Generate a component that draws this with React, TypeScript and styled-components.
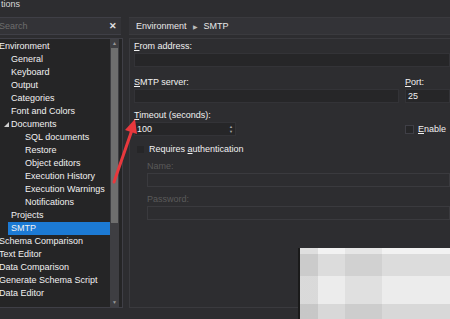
import styled, { createGlobalStyle } from 'styled-components';

const GlobalStyle = createGlobalStyle`
  html, body {
    margin: 0;
    padding: 0;
    background: #2d2d30;
    overflow: hidden;
  }
  body {
    font-family: "Liberation Sans", "Noto Sans", sans-serif;
    font-size: 9px;
    color: #f1f1f1;
  }
`;

const Window = styled.div`
  position: relative;
  width: 450px;
  height: 319px;
  overflow: hidden;
  display: flex;
  flex-direction: column;
  background: #2d2d30;
`;

const TitleBar = styled.div`
  height: 14px;
  line-height: 8px;
  padding-left: 1px;
  color: #d8d8d8;
  overflow: hidden;
`;

const TopRow = styled.div`
  display: flex;
  gap: 8px;
  height: 18px;
  margin-top: 3px;
`;

const SearchBox = styled.div`
  width: 122px;
  margin-left: -1px;
  display: flex;
  align-items: center;
  justify-content: space-between;
  background: #333337;
  border-top: 1px solid #3f3f46;
  border-bottom: 1px solid #3f3f46;
  color: #6d6d6d;
  padding-right: 4px;
  box-sizing: border-box;
`;

const ClearIcon = styled.span`
  color: #e0e0e0;
  font-size: 9px;
  font-weight: bold;
`;

const Breadcrumb = styled.div`
  flex: 1;
  display: flex;
  align-items: center;
  gap: 6px;
  padding-left: 7px;
  background: #333337;
  border-top: 1px solid #3a3a3e;
  border-bottom: 1px solid #3a3a3e;
  color: #e8e8e8;
`;

const Sep = styled.span`
  font-size: 6px;
  color: #bbb;
`;

const Main = styled.div`
  display: flex;
  gap: 6px;
  margin-top: 3px;
  height: 270px;
`;

const TreePanel = styled.div`
  width: 124px;
  margin-left: -1px;
  display: flex;
  background: #252526;
  border: 1px solid #3f3f46;
  border-left: none;
  box-sizing: border-box;
`;

const TreeList = styled.div`
  flex: 1;
  padding-top: 1px;
`;

const TreeRow = styled.div<{ $depth: number; $selected?: boolean }>`
  height: 13px;
  line-height: 13px;
  display: flex;
  align-items: center;
  margin-left: ${({ $depth }) => ($depth === 0 ? 0 : $depth === 1 ? 9 : 23)}px;
  padding-left: ${({ $depth }) => ($depth === 0 ? 0 : 3)}px;
  background: ${({ $selected }) => ($selected ? '#1c7ad4' : 'transparent')};
  color: #f1f1f1;
  white-space: nowrap;
`;

const Caret = styled.svg`
  width: 5px;
  height: 5px;
  margin-left: -7px;
  margin-right: 2px;
`;

const ScrollBar = styled.div`
  width: 9px;
  margin-right: 3px;
  display: flex;
  flex-direction: column;
  align-items: center;
  background: #3e3e42;
`;

const ScrollArrow = styled.div`
  height: 9px;
  color: #999;
  font-size: 5px;
  line-height: 9px;
`;

const ScrollThumb = styled.div`
  width: 7px;
  height: 175px;
  background: #6e6e6e;
`;

const ScrollSpacer = styled.div`
  flex: 1;
`;

const FormPanel = styled.div`
  flex: 1;
  position: relative;
  border-top: 1px solid #3a3a3e;
  border-bottom: 1px solid #3a3a3e;
  border-left: 1px solid #3a3a3e;
  padding: 2px 0 0 4px;
  display: flex;
  flex-direction: column;
`;

const Label = styled.div<{ $disabled?: boolean; $gapTop?: number }>`
  height: 11px;
  line-height: 11px;
  margin-top: ${({ $gapTop }) => $gapTop ?? 0}px;
  color: ${({ $disabled }) => ($disabled ? '#5a5a5a' : '#f1f1f1')};
`;

const Input = styled.div<{ $disabled?: boolean }>`
  height: 12px;
  line-height: 12px;
  background: ${({ $disabled }) => ($disabled ? '#2d2d30' : '#262628')};
  border: 1px solid ${({ $disabled }) => ($disabled ? '#3a3a3e' : '#333337')};
  padding-left: 2px;
  color: #f1f1f1;
`;

const FieldRow = styled.div<{ $gapTop?: number }>`
  display: flex;
  gap: 6px;
  margin-top: ${({ $gapTop }) => $gapTop ?? 0}px;
`;

const Field = styled.div<{ $width?: number }>`
  flex: ${({ $width }) => ($width ? 'none' : 1)};
  width: ${({ $width }) => ($width ? `${$width}px` : 'auto')};
  display: flex;
  flex-direction: column;
  gap: 1px;
`;

const Spinner = styled.div`
  width: 96px;
  height: 12px;
  display: flex;
  align-items: center;
  justify-content: space-between;
  background: #262628;
  border: 1px solid #333337;
  padding: 0 2px;
`;

const SpinArrows = styled.div`
  display: flex;
  flex-direction: column;
  font-size: 4px;
  line-height: 5px;
  color: #aaa;
`;

const CheckRow = styled.label<{ $indent?: number; $gapTop?: number }>`
  display: flex;
  align-items: center;
  gap: 4px;
  height: 14px;
  margin-left: ${({ $indent }) => $indent ?? 0}px;
  margin-top: ${({ $gapTop }) => $gapTop ?? 0}px;
  color: #f1f1f1;
`;

const Box = styled.span<{ $outlined?: boolean }>`
  width: 9px;
  height: 9px;
  background: #262628;
  border: 1px solid ${({ $outlined }) => ($outlined ? '#3f3f46' : '#2d2d30')};
  box-sizing: border-box;
`;

const AuthSection = styled.div`
  margin-left: 13px;
  margin-top: 5px;
  display: flex;
  flex-direction: column;
  gap: 1px;
`;

const Mosaic = styled.div`
  position: absolute;
  left: 168px;
  right: 0;
  top: 209px;
  height: 80px;
  border-left: 2px solid #1a1a1a;
  background:
    linear-gradient(90deg, rgba(0,0,0,0.08) 0 12%, transparent 12% 30%, rgba(0,0,0,0.05) 30% 55%, transparent 55%),
    linear-gradient(180deg, #f2f2f2 0 8%, #dcdcdc 8% 35%, #ececec 35% 70%, #d8d8d8 70%);
`;

const Arrow = styled.svg`
  position: absolute;
  left: 110px;
  top: 116px;
  width: 32px;
  height: 70px;
  pointer-events: none;
`;

const treeItems: { label: string; depth: number; caret?: boolean; selected?: boolean }[] = [
  { label: 'Environment', depth: 0 },
  { label: 'General', depth: 1 },
  { label: 'Keyboard', depth: 1 },
  { label: 'Output', depth: 1 },
  { label: 'Categories', depth: 1 },
  { label: 'Font and Colors', depth: 1 },
  { label: 'Documents', depth: 1, caret: true },
  { label: 'SQL documents', depth: 2 },
  { label: 'Restore', depth: 2 },
  { label: 'Object editors', depth: 2 },
  { label: 'Execution History', depth: 2 },
  { label: 'Execution Warnings', depth: 2 },
  { label: 'Notifications', depth: 2 },
  { label: 'Projects', depth: 1 },
  { label: 'SMTP', depth: 1, selected: true },
  { label: 'Schema Comparison', depth: 0 },
  { label: 'Text Editor', depth: 0 },
  { label: 'Data Comparison', depth: 0 },
  { label: 'Generate Schema Script', depth: 0 },
  { label: 'Data Editor', depth: 0 },
];

export default function App() {
  return (
    <Window>
      <GlobalStyle />
      <TitleBar>tions</TitleBar>
      <TopRow>
        <SearchBox>
          <span>Search</span>
          <ClearIcon>✕</ClearIcon>
        </SearchBox>
        <Breadcrumb>
          <span>Environment</span>
          <Sep>▶</Sep>
          <span>SMTP</span>
        </Breadcrumb>
      </TopRow>
      <Main>
        <TreePanel>
          <TreeList>
            {treeItems.map((item) => (
              <TreeRow key={item.label} $depth={item.depth} $selected={item.selected}>
                {item.caret && (
                  <Caret viewBox="0 0 5 5">
                    <path d="M5 0 L5 5 L0 5 Z" fill="#d0d0d0" />
                  </Caret>
                )}
                {item.label}
              </TreeRow>
            ))}
          </TreeList>
          <ScrollBar>
            <ScrollArrow>▲</ScrollArrow>
            <ScrollThumb />
            <ScrollSpacer />
            <ScrollArrow>▼</ScrollArrow>
          </ScrollBar>
        </TreePanel>
        <FormPanel>
          <FieldRow>
            <Field>
              <Label>
                <u>F</u>rom address:
              </Label>
              <Input />
            </Field>
          </FieldRow>
          <FieldRow $gapTop={10}>
            <Field>
              <Label>
                <u>S</u>MTP server:
              </Label>
              <Input />
            </Field>
            <Field $width={45}>
              <Label>
                <u>P</u>ort:
              </Label>
              <Input>25</Input>
            </Field>
          </FieldRow>
          <FieldRow $gapTop={7}>
            <Field>
              <Label>
                <u>T</u>imeout (seconds):
              </Label>
              <Spinner>
                <span>100</span>
                <SpinArrows>
                  <span>▲</span>
                  <span>▼</span>
                </SpinArrows>
              </Spinner>
            </Field>
            <Field $width={45}>
              <Label>&nbsp;</Label>
              <CheckRow>
                <Box $outlined />
                <span>
                  <u>E</u>nable
                </span>
              </CheckRow>
            </Field>
          </FieldRow>
          <CheckRow $indent={2} $gapTop={6}>
            <Box />
            <span>
              Requires <u>a</u>uthentication
            </span>
          </CheckRow>
          <AuthSection>
            <Label $disabled>Name:</Label>
            <Input $disabled />
            <Label $disabled $gapTop={6}>
              Password:
            </Label>
            <Input $disabled />
          </AuthSection>
          <Mosaic />
        </FormPanel>
      </Main>
      <Arrow viewBox="0 0 32 70">
        <path d="M4 66 L22 14" stroke="#e8383d" strokeWidth="3" strokeLinecap="round" fill="none" />
        <path d="M25 3 L15 14 L27 18 Z" fill="#e8383d" />
      </Arrow>
    </Window>
  );
}
